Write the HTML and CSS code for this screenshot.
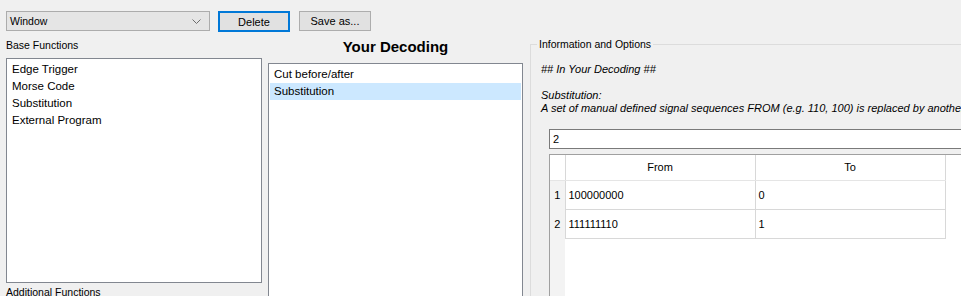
FILE: index.html
```html
<!DOCTYPE html>
<html>
<head>
  <meta charset="utf-8" />
  <title>Decoding</title>
  <link rel="stylesheet" href="styles.css">
</head>
<body>
<div class="toolbar">
  <div class="combo">
    <span>Window</span>
    <svg class="chevron" width="9" height="5" viewBox="0 0 9 5"><polyline points="0.5,0.5 4.5,4.5 8.5,0.5" fill="none" stroke="#6d6d6d" stroke-width="1" /></svg>
  </div>
  <button class="btn btnDefault">Delete</button>
  <button class="btn">Save as...</button>
</div>

<div class="panes">
  <div class="pane paneBase">
    <div class="caption">Base Functions</div>
    <ul class="list listBase">
      <li>Edge Trigger</li>
      <li>Morse Code</li>
      <li>Substitution</li>
      <li>External Program</li>
    </ul>
    <div class="caption captionExtra">Additional Functions</div>
  </div>

  <div class="pane paneDecoding">
    <h2>Your Decoding</h2>
    <ul class="list listDecoding">
      <li>Cut before/after</li>
      <li class="selected">Substitution</li>
    </ul>
  </div>

  <fieldset class="options">
    <legend>Information and Options</legend>
    <div class="info">
      <p>## In Your Decoding ##</p>
      <p class="gap">Substitution:</p>
      <p>A set of manual defined signal sequences FROM (e.g. 110, 100) is replaced by another set of signal sequences TO</p>
    </div>
    <input class="count" type="text" value="2" />
    <div class="grid">
      <table>
        <tr class="head">
          <th class="rowNum"></th>
          <th>From</th>
          <th>To</th>
        </tr>
        <tr>
          <td class="rowNum">1</td>
          <td>100000000</td>
          <td>0</td>
        </tr>
        <tr>
          <td class="rowNum">2</td>
          <td>111111110</td>
          <td>1</td>
        </tr>
      </table>
    </div>
  </fieldset>
</div>
</body>
</html>
```

FILE: styles.css
```css
* { margin: 0; padding: 0; box-sizing: border-box; }
html, body { width: 961px; height: 296px; overflow: hidden; }
body { background: #f0f0f0; color: #000; font-family: "Liberation Sans", Arial, sans-serif; font-size: 11px; }

/* top bar */
.toolbar { display: flex; align-items: flex-start; padding: 11px 0 0 6px; }
.combo { display: flex; align-items: center; justify-content: space-between; width: 204px; height: 20px; padding: 0 8px 0 3px; background: #e5e5e5; border: 1px solid #acacac; font-size: 10.5px; }
.btn { height: 20px; width: 72px; margin-left: 9px; background: #e1e1e1; border: 1px solid #adadad; font-family: inherit; font-size: 11px; color: #000; }
.btnDefault { height: 21px; margin-left: 8px; border: 2px solid #0078d7; }

/* columns */
.panes { display: flex; align-items: flex-start; padding: 5px 0 0 6px; }
.pane { flex: none; }
.paneBase { width: 256px; }
.paneDecoding { width: 255px; margin-left: 6px; }
.caption { font-size: 10.5px; line-height: 16px; margin-bottom: 5px; }
.captionExtra { margin-top: 1px; }
.paneDecoding h2 { font-size: 15px; line-height: 18px; text-align: center; margin: 1px 0 7px; }

.list { list-style: none; background: #fff; border: 1px solid #828790; padding: 2px 1px; font-size: 11.5px; }
.list li { height: 17px; line-height: 17px; padding-left: 4px; white-space: nowrap; }
.listBase { height: 225px; }
.listDecoding { height: 260px; }
.list li.selected { background: #cce8ff; }

/* right group box */
.options { flex: none; width: 520px; height: 300px; margin-left: 7px; border: 1px solid #dcdcdc; border-right: none; border-bottom: none; padding: 0 0 0 10px; }
.options legend { font-size: 10.5px; line-height: 14px; margin-left: -4px; padding: 0 2px; }
.info { font-style: italic; font-size: 11px; line-height: 13px; padding-top: 12px; white-space: nowrap; }
.info .gap { margin-top: 13px; }
.count { display: block; width: 480px; height: 20px; margin: 14px 0 0 8px; border: 1px solid #7a7a7a; padding: 0 3px; font-family: inherit; font-size: 11px; background: #fff; outline: none; }
.grid { width: 480px; height: 160px; margin: 5px 0 0 8px; border: 1px solid #a0a0a0; background: linear-gradient(to right, #f3f3f3 15px, #fff 15px); }
.grid table { border-collapse: collapse; font-size: 11px; }
.grid th { height: 25px; width: 190px; font-weight: normal; background: #fff; border-right: 1px solid #d8d8d8; text-align: center; }
.grid td { height: 29px; padding-left: 3px; border: 1px solid #d8d8d8; border-left: none; border-top: none; background: #fff; }
.grid .head th { border-bottom: 1px solid #e5e5e5; }
.grid .rowNum { width: 15px; padding: 0; text-align: center; background: #f3f3f3; border-bottom: none; border-right: 1px solid #d8d8d8; }
.grid th.rowNum { background: #fff; }
```
